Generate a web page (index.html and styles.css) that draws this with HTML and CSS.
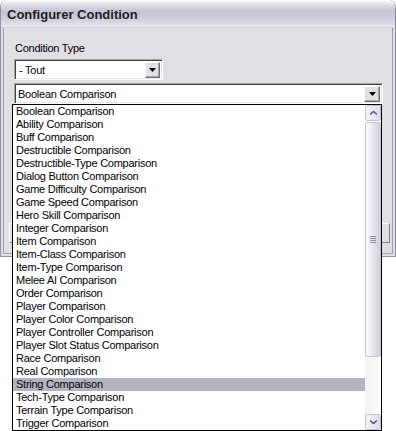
FILE: index.html
```html
<!DOCTYPE html>
<html>
<head>
<meta charset="utf-8">
<link rel="stylesheet" href="styles.css">
</head>
<body>
<div class="window">
  <div class="titlebar"><span class="title">Configurer Condition</span></div>
  <div class="client">
    <div class="label">Condition Type</div>
    <div class="combo combo-small">
      <span class="combo-text">- Tout</span>
      <span class="combo-btn"><svg width="7" height="4" viewBox="0 0 7 4"><path d="M0 0h7L3.5 4z" fill="#000"/></svg></span>
    </div>
    <div class="combo combo-wide">
      <span class="combo-text">Boolean Comparison</span>
      <span class="combo-btn"><svg width="7" height="4" viewBox="0 0 7 4"><path d="M0 0h7L3.5 4z" fill="#000"/></svg></span>
    </div>
    <div class="footer">
      <span class="btn btn-left"></span>
      <span class="btn btn-right"></span>
    </div>
  </div>
</div>

<div class="dropdown">
  <ul class="items">
    <li>Boolean Comparison</li>
    <li>Ability Comparison</li>
    <li>Buff Comparison</li>
    <li>Destructible Comparison</li>
    <li>Destructible-Type Comparison</li>
    <li>Dialog Button Comparison</li>
    <li>Game Difficulty Comparison</li>
    <li>Game Speed Comparison</li>
    <li>Hero Skill Comparison</li>
    <li>Integer Comparison</li>
    <li>Item Comparison</li>
    <li>Item-Class Comparison</li>
    <li>Item-Type Comparison</li>
    <li>Melee AI Comparison</li>
    <li>Order Comparison</li>
    <li>Player Comparison</li>
    <li>Player Color Comparison</li>
    <li>Player Controller Comparison</li>
    <li>Player Slot Status Comparison</li>
    <li>Race Comparison</li>
    <li>Real Comparison</li>
    <li class="selected">String Comparison</li>
    <li>Tech-Type Comparison</li>
    <li>Terrain Type Comparison</li>
    <li>Trigger Comparison</li>
  </ul>
  <div class="scrollbar">
    <div class="sb-btn"><svg width="7" height="4" viewBox="0 0 7 4"><path d="M0 3.5L3.5 0.5L7 3.5" fill="none" stroke="#4d6185" stroke-width="1.6"/></svg></div>
    <div class="thumb">
      <div class="grip"><i></i><i></i><i></i><i></i></div>
    </div>
    <div class="track"></div>
    <div class="sb-btn"><svg width="7" height="4" viewBox="0 0 7 4"><path d="M0 0.5L3.5 3.5L7 0.5" fill="none" stroke="#4d6185" stroke-width="1.6"/></svg></div>
  </div>
</div>
</body>
</html>
```

FILE: styles.css
```css
html, body {
  margin: 0;
  padding: 0;
  background: #ffffff;
}
body {
  width: 396px;
  height: 431px;
  overflow: hidden;
  position: relative;
  font-family: "Liberation Sans", Arial, sans-serif;
  font-size: 11px;
  letter-spacing: -0.25px;
  color: #000;
}
.window {
  width: 394px;
  height: 256px;
  border: 1px solid #8e8fa8;
  border-top: 0;
  border-radius: 7px 7px 0 0;
  background: #e0dfe3;
  display: flex;
  flex-direction: column;
  box-sizing: content-box;
}
.titlebar {
  height: 28px;
  border-radius: 7px 7px 0 0;
  background: linear-gradient(to bottom, #fdfdfe 0px, #e2e2ea 4px, #c4c4d4 11px, #c9c9d8 17px, #dedee8 24px, #e8e8ee 27px, #b4b4c4 28px);
  display: flex;
  align-items: center;
  padding-left: 6px;
  flex: none;
  box-shadow: inset 0 1px 0 #ffffff;
}
.title {
  font-family: "Liberation Sans", Arial, sans-serif;
  font-weight: bold;
  font-size: 13px;
  color: #1e1e1e;
  letter-spacing: 0;
  padding-top: 1px;
}
.client {
  flex: 1;
  margin: 0 2px 2px 2px;
  border: 1px solid #9f9fae;
  border-top: 0;
  background: #e0dfe3;
  padding: 13px 0 0 10px;
  display: flex;
  flex-direction: column;
}
.label {
  height: 14px;
  line-height: 14px;
  padding-left: 1px;
  margin-bottom: 4px;
}
.combo {
  background: #fff;
  border-top: 1px solid #a5a5a5;
  border-left: 1px solid #a5a5a5;
  border-right: 1px solid #ffffff;
  border-bottom: 1px solid #ffffff;
  box-shadow: inset 1px 1px 0 #404040, inset -1px -1px 0 #e8e8e8;
  display: flex;
  align-items: center;
  justify-content: space-between;
  box-sizing: border-box;
  padding: 2px 2px 2px 4px;
}
.combo-small {
  width: 149px;
  height: 21px;
  margin-bottom: 3px;
}
.combo-wide {
  width: 369px;
  height: 21px;
  padding-left: 3px;
}
.combo-text {
  line-height: 15px;
  padding-top: 1px;
}
.combo-btn {
  width: 15px;
  height: 16px;
  box-sizing: border-box;
  background: #e0dfe3;
  border-top: 1px solid #ffffff;
  border-left: 1px solid #ffffff;
  border-right: 1px solid #707070;
  border-bottom: 1px solid #707070;
  box-shadow: inset -1px -1px 0 #a8a8b0;
  display: flex;
  align-items: center;
  justify-content: center;
}
.combo-wide .combo-btn {
  width: 16px;
  margin-right: 0;
}
.footer {
  margin-top: auto;
  height: 30px;
  display: flex;
  justify-content: space-between;
  padding-right: 2px;
}
.btn {
  height: 20px;
  width: 60px;
  border: 1px solid #7f7f8a;
  border-top-color: #fff;
  border-left-color: #fff;
  box-sizing: border-box;
}
.btn-left {
  margin-left: -5px;
}
.dropdown {
  position: absolute;
  left: 12px;
  top: 104px;
  width: 370px;
  height: 327px;
  box-sizing: border-box;
  border: 1px solid #000;
  background: #fff;
  display: flex;
}
.items {
  list-style: none;
  margin: 0;
  padding: 0;
  flex: 1;
}
.items li {
  height: 13px;
  line-height: 13px;
  padding-left: 3px;
  white-space: nowrap;
}
.items li.selected {
  background: #b2b4bf;
}
.scrollbar {
  width: 16px;
  display: flex;
  flex-direction: column;
  background: linear-gradient(to right, #f3f3f6, #fdfdfe);
}
.sb-btn {
  height: 16px;
  box-sizing: border-box;
  border: 1px solid #c5c5d3;
  border-radius: 2px;
  background: linear-gradient(to right, #f4f4f8, #dcdce6);
  display: flex;
  align-items: center;
  justify-content: center;
  flex: none;
}
.thumb {
  height: 235px;
  margin-top: 1px;
  box-sizing: border-box;
  border: 1px solid #c5c5d3;
  border-radius: 2px;
  background: linear-gradient(to right, #fafafc 0%, #ececf2 40%, #cfcfdd 100%);
  display: flex;
  align-items: center;
  justify-content: center;
  flex: none;
}
.grip {
  display: flex;
  flex-direction: column;
  gap: 1px;
}
.grip i {
  display: block;
  width: 6px;
  height: 1px;
  background: #8d8da4;
}
.track {
  flex: 1;
}
```
